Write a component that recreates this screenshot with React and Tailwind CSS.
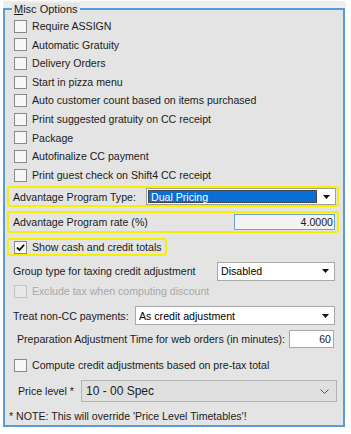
import React from 'react';

const font = { fontFamily: '"Liberation Sans", Arial, sans-serif' };

const Box = ({ checked = false, disabled = false }) => (
  <span
    className={`flex h-[13px] w-[13px] shrink-0 items-center justify-center border ${
      disabled ? 'border-[#c4c4c4] bg-[#e8e8e8]' : 'border-[#8a8a8a] bg-[#f7f7f7]'
    }`}
  >
    {checked && (
      <svg width="9" height="9" viewBox="0 0 9 9">
        <path d="M1 4.5 L3.5 7 L8 1.8" fill="none" stroke="#111" strokeWidth="1.8" />
      </svg>
    )}
  </span>
);

const CheckRow = ({ label, checked, disabled, className = '' }) => (
  <div className={`flex h-[18.6px] items-center gap-[5px] pl-[9px] ${className}`}>
    <Box checked={checked} disabled={disabled} />
    <span className={disabled ? 'text-[#a8a8a8]' : 'text-[#1b1b1b]'}>{label}</span>
  </div>
);

const Arrow = () => (
  <span className="flex w-[17px] items-center justify-center">
    <svg width="7" height="4" viewBox="0 0 7 4">
      <path d="M0 0 H7 L3.5 4 Z" fill="#111" />
    </svg>
  </span>
);

const Combo = ({ value, className = '' }) => (
  <div className={`flex h-[19px] items-stretch border border-[#a8a8a8] bg-white ${className}`}>
    <span className="flex flex-1 items-center pl-[3px]">{value}</span>
    <Arrow />
  </div>
);

const options = [
  'Require ASSIGN',
  'Automatic Gratuity',
  'Delivery Orders',
  'Start in pizza menu',
  'Auto customer count based on items purchased',
  'Print suggested gratuity on CC receipt',
  'Package',
  'Autofinalize CC payment',
  'Print guest check on Shift4 CC receipt',
];

export default function App() {
  return (
    <div className="h-[434px] w-[351px] whitespace-nowrap bg-white pt-[1px] text-[10.6px] leading-none" style={font}>
      <div className="ml-[3px] h-[8px] w-[343px] bg-[#eeeeee]" />
      <fieldset className="relative -mt-[1px] ml-[3px] h-[419px] w-[342px] border-2 border-[#5b9bd5] bg-[#e4e4e4] px-0 pt-[7px]">
        <div className="absolute -top-[7px] left-[7px] bg-[#e4e4e4] px-[2px] text-[11px] leading-[12px] text-[#1b1b1b]">
          <span className="underline">M</span>isc Options
        </div>

        <div className="flex flex-col">
          {options.map((o) => (
            <CheckRow key={o} label={o} />
          ))}
        </div>

        <div className="mt-[2px] ml-[2px] mr-[4px] flex h-[21px] items-center rounded-[3px] border-2 border-[#f4f000] pl-[4px] pr-[1px]">
          <span className="w-[133px] text-[#1b1b1b]">Advantage Program Type:</span>
          <div className="flex h-[17px] flex-1 items-stretch border border-[#a0a0a0] bg-white">
            <span className="m-[1px] flex flex-1 items-center border border-dotted border-[#333] bg-[#0a6fd4] pl-[2px] text-white">
              Dual Pricing
            </span>
            <Arrow />
          </div>
        </div>

        <div className="mt-[4px] ml-[2px] mr-[4px] flex h-[22px] items-center rounded-[3px] border-2 border-[#f4f000] pl-[4px] pr-[2px]">
          <span className="flex-1 text-[#1b1b1b]">Advantage Program rate (%)</span>
          <div className="flex h-[16px] w-[101px] items-center justify-end border border-[#6f9fd3] bg-[#f3f3f3] pr-[1px] text-[#1b1b1b]">
            4.0000
          </div>
        </div>

        <div className="mt-[5px] ml-[2px] flex h-[18px] w-[160px] items-center gap-[5px] rounded-[3px] border-2 border-[#f4f000] pl-[5px]">
          <Box checked />
          <span className="text-[#1b1b1b]">Show cash and credit totals</span>
        </div>

        <div className="mt-[5px] flex h-[20px] items-center pl-[8px] pr-[8px]">
          <span className="flex-1 text-[#1b1b1b]">Group type for taxing credit adjustment</span>
          <Combo value="Disabled" className="w-[118px]" />
        </div>

        <CheckRow label="Exclude tax when computing discount" disabled className="mt-[1px]" />

        <div className="mt-[5px] flex h-[20px] items-center pl-[8px] pr-[8px]">
          <span className="w-[122px] text-[#1b1b1b]">Treat non-CC payments:</span>
          <Combo value="As credit adjustment" className="flex-1" />
        </div>

        <div className="mt-[4px] flex h-[19px] items-center pl-[12px] pr-[9px]">
          <span className="flex-1 text-[#1b1b1b]">Preparation Adjustment Time for web orders (in minutes):</span>
          <div className="flex h-[18px] w-[45px] items-center justify-end border border-[#a8a8a8] bg-white pr-[2px] text-[#1b1b1b]">
            60
          </div>
        </div>

        <CheckRow label="Compute credit adjustments based on pre-tax total" className="mt-[7px]" />

        <div className="mt-[5px] flex h-[23px] items-center pl-[13px] pr-[6px]">
          <span className="w-[63px] text-[#1b1b1b]">Price level *</span>
          <div className="flex h-[22px] flex-1 items-center border border-[#b2b2b2] bg-[#e0e0e0] pl-[4px] pr-[7px] text-[12px] text-[#1b1b1b]">
            <span className="flex-1">10 - 00 Spec</span>
            <svg width="9" height="5" viewBox="0 0 9 5">
              <path d="M0.5 0.5 L4.5 4.5 L8.5 0.5" fill="none" stroke="#555" strokeWidth="1" />
            </svg>
          </div>
        </div>

        <div className="mt-[8px] pl-[4px] text-[#1b1b1b]">* NOTE: This will override 'Price Level Timetables'!</div>
      </fieldset>
    </div>
  );
}
